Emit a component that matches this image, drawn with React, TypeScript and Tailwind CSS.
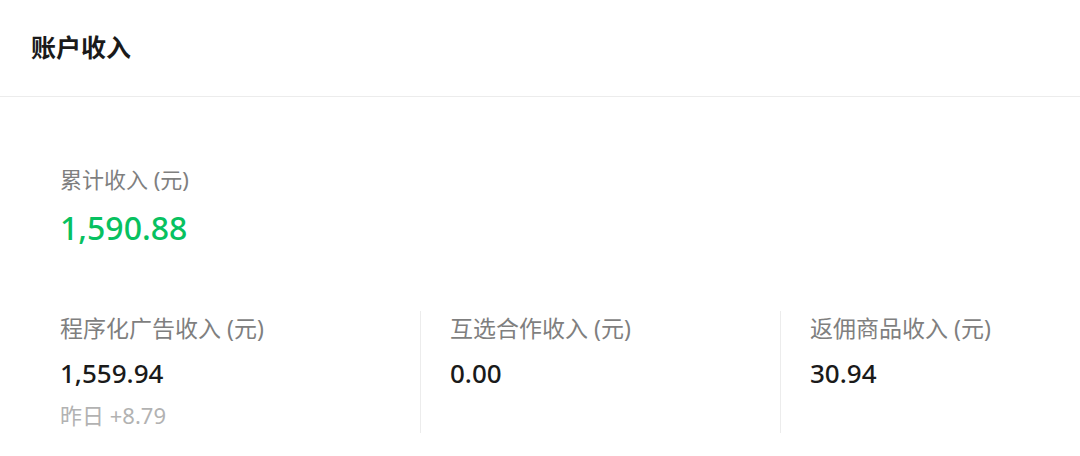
export default function App() {
  const font = { fontFamily: '"Noto Sans", "Noto Sans CJK SC", sans-serif' }
  const cols = [
    { label: '程序化广告收入', value: '1,559.94', extra: '+8.79' },
    { label: '互选合作收入', value: '0.00' },
    { label: '返佣商品收入', value: '30.94' },
  ]

  return (
    <div className="w-[1080px] h-[456px] bg-white overflow-hidden" style={font}>
      {/* Header */}
      <div className="h-[97px] border-b border-[#ececec] pl-[31px] flex items-center">
        <h1 className="text-[25px] font-bold text-[#1a1a1a] leading-none -mt-[2px]">账户收入</h1>
      </div>

      {/* Total */}
      <div className="pl-[60px] pt-[65px]">
        <p className="text-[22px] text-[#7f7f7f] leading-[34px]">累计收入 (元)</p>
        <p className="text-[32px] font-medium text-[#07c160] leading-[44px] mt-[10px]">1,590.88</p>
      </div>

      {/* Breakdown */}
      <div className="flex pl-[60px] mt-[61px]">
        {cols.map((c, i) => (
          <div
            key={i}
            className={`w-[360px] shrink-0 h-[122px] ${i > 0 ? 'border-l border-[#ececec] pl-[29px]' : ''}`}
          >
            <p className="text-[23px] text-[#7f7f7f] leading-[34px]">{c.label} (元)</p>
            <p className="text-[26px] font-medium text-[#1a1a1a] leading-[36px] mt-[10px]">{c.value}</p>
            {c.extra && (
              <p className="text-[22px] text-[#b2b2b2] leading-[30px] mt-[9px]">
                昨日 <span>{c.extra}</span>
              </p>
            )}
          </div>
        ))}
      </div>
    </div>
  )
}
